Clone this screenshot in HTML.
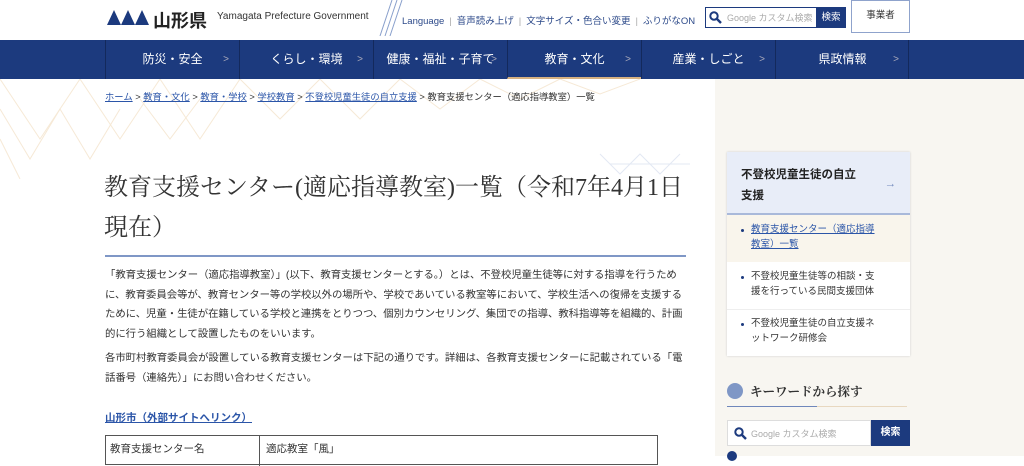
<!DOCTYPE html>
<html><head><meta charset="utf-8"><style>
*{margin:0;padding:0;box-sizing:border-box}
body{width:1024px;height:456px;overflow:hidden;background:#fff;font-family:"Liberation Sans","Noto Sans CJK JP",sans-serif;color:#333;position:relative}
.abs{position:absolute}
.hdr a{color:#2d4a8a;text-decoration:none}
.nav{top:40px;left:0;width:1024px;height:39px;background:#1c3a7e}
.nav div{position:absolute;top:0;height:39px;width:134px;border-left:1px solid #13295c;color:#fff;font-size:12px;line-height:39px;text-align:center}
.nav div span{position:absolute;right:10px;top:0;color:#aab;font-size:10px}
.side{left:715px;top:79px;width:309px;height:377px;background:#f8f6f1}
.bc{top:89px;left:105px;font-size:9.3px;color:#333;white-space:nowrap}
.bc a{color:#2b55a8;text-decoration:underline}
p.t{font-size:10.4px;line-height:19.5px;color:#333;letter-spacing:-0.05px}
.li{position:absolute;left:751px;font-size:9.5px;line-height:14.5px;color:#333}
.li:before{content:"";position:absolute;left:-10px;top:6px;width:3px;height:3px;border-radius:50%;background:#1c3a7e}
</style></head><body>
<div class="abs side"></div>
<svg class="abs" style="left:0;top:79px" width="715" height="100"><g stroke="#f6e9d6" stroke-width="1" fill="none">
<path d="M0 0 L40 60 L80 0 L120 60 L160 0 L200 60 L240 0 L280 40 L320 0 L360 40 L400 0 L440 30 L480 0 L520 20 L560 0 L600 15 L640 0"/>
<path d="M0 30 L30 80 L60 30 L90 80 L120 30 M0 60 L20 100 M140 20 L170 60 L200 20"/></g>
<g stroke="#e3e8f3" fill="none"><path d="M600 75 L620 95 L640 75 L660 95 L680 75 M610 85 L690 85"/></g></svg>
<div class="hdr">
<svg class="abs" style="left:107px;top:10px" width="42" height="15"><path d="M0 15L7 0L14 15ZM14 15L21 0L28 15ZM28 15L35 0L42 15Z" fill="#1c3a7e"/></svg>
<div class="abs" style="left:153px;top:7px;font-size:18px;font-weight:bold;color:#222">山形県</div>
<div class="abs" style="left:217px;top:11px;font-size:10px;color:#333">Yamagata Prefecture Government</div>
<svg class="abs" style="left:375px;top:0" width="30" height="36"><path d="M10 36L22 0M15 36L27 0M5 36L17 0" stroke="#8aa0cc" stroke-width="1"/></svg>
<div class="abs" style="left:402px;top:13px;font-size:9.5px;color:#2d4a8a;white-space:nowrap"><a>Language</a><span style="color:#aaa;margin:0 5px">|</span><a>音声読み上げ</a><span style="color:#aaa;margin:0 5px">|</span><a>文字サイズ・色合い変更</a><span style="color:#aaa;margin:0 5px">|</span><a>ふりがなON</a></div>
<div class="abs" style="left:705px;top:7px;width:141px;height:21px;border:1px solid #1c3a7e;background:#fff"></div>
<svg class="abs" style="left:709px;top:11px" width="13" height="13"><circle cx="5" cy="5" r="3.7" stroke="#1c3a7e" stroke-width="2" fill="none"/><path d="M8 8L12 12" stroke="#1c3a7e" stroke-width="2.4"/></svg>
<div class="abs" style="left:727px;top:11px;font-size:9px;color:#aaa;white-space:nowrap">Google カスタム検索</div>
<div class="abs" style="left:816px;top:7px;width:30px;height:21px;background:#1c3a7e;color:#fff;font-size:9.5px;line-height:21px;text-align:center">検索</div>
<div class="abs" style="left:851px;top:0;width:59px;height:33px;border:1px solid #8fa3cc;color:#333;font-size:9.5px;line-height:30px;text-align:center">事業者</div>
</div>
<div class="abs nav">
<div style="left:105px">防災・安全<span>&gt;</span></div>
<div style="left:239px">くらし・環境<span>&gt;</span></div>
<div style="left:373px">健康・福祉・子育て<span>&gt;</span></div>
<div style="left:507px;border-bottom:2px solid #d7b282">教育・文化<span>&gt;</span></div>
<div style="left:641px">産業・しごと<span>&gt;</span></div>
<div style="left:775px">県政情報<span>&gt;</span></div>
<div style="left:908px;width:116px"></div>
</div>
<div class="abs bc"><a>ホーム</a> &gt; <a>教育・文化</a> &gt; <a>教育・学校</a> &gt; <a>学校教育</a> &gt; <a>不登校児童生徒の自立支援</a> &gt; 教育支援センター（適応指導教室）一覧</div>
<div class="abs" style="left:104px;top:168px;width:600px;font-family:'Liberation Serif','Noto Serif CJK SC',serif;font-size:24px;line-height:40px;color:#333">教育支援センター(適応指導教室)一覧（令和7年4月1日現在）</div>
<div class="abs" style="left:105px;top:255px;width:581px;height:2px;background:#7f97c6"></div>
<div class="abs" style="left:105px;top:266px;width:583px">
<p class="t">「教育支援センター（適応指導教室）」(以下、教育支援センターとする。）とは、不登校児童生徒等に対する指導を行うために、教育委員会等が、教育センター等の学校以外の場所や、学校であいている教室等において、学校生活への復帰を支援するために、児童・生徒が在籍している学校と連携をとりつつ、個別カウンセリング、集団での指導、教科指導等を組織的、計画的に行う組織として設置したものをいいます。</p>
<p class="t" style="margin-top:5px">各市町村教育委員会が設置している教育支援センターは下記の通りです。詳細は、各教育支援センターに記載されている「電話番号（連絡先）」にお問い合わせください。</p>
</div>
<div class="abs" style="left:105px;top:410px;font-size:10.5px;font-weight:bold;color:#2b55a8;text-decoration:underline">山形市（外部サイトへリンク）</div>
<div class="abs" style="left:105px;top:435px;width:553px;height:30px;border:1px solid #555;font-size:10.5px">
<div class="abs" style="left:0;top:0;width:154px;height:30px;border-right:1px solid #555;padding:5px 4px">教育支援センター名</div>
<div class="abs" style="left:160px;top:5px">適応教室「風」</div></div>
<div class="abs" style="left:727px;top:152px;width:183px;height:204px;background:#fff;box-shadow:0 0 2px #ccc"></div>
<div class="abs" style="left:727px;top:152px;width:183px;height:63px;background:#e8edf8;border-bottom:2px solid #a9b9da;padding:13px 14px;font-size:11.5px;font-weight:bold;line-height:21px;color:#222">不登校児童生徒の自立<br>支援<span style="position:absolute;right:14px;top:22px;color:#6f87bb;font-weight:normal">→</span></div>
<div class="abs" style="left:727px;top:215px;width:183px;height:47px;background:#f9f5ec"></div>
<div class="li" style="top:223px;color:#2b55a8;text-decoration:underline">教育支援センター（適応指導<br>教室）一覧</div>
<div class="li" style="top:270px">不登校児童生徒等の相談・支<br>援を行っている民間支援団体</div>
<div class="abs" style="left:727px;top:309px;width:183px;height:1px;background:#eee"></div>
<div class="li" style="top:317px">不登校児童生徒の自立支援ネ<br>ットワーク研修会</div>
<div class="abs" style="left:727px;top:383px;width:16px;height:16px;border-radius:50%;background:#7f97c6"></div>
<div class="abs" style="left:750px;top:382px;font-size:12.5px;font-weight:bold;font-family:'Liberation Serif','Noto Serif CJK SC',serif;color:#333">キーワードから探す</div>
<div class="abs" style="left:727px;top:406px;width:90px;height:1px;background:#6f87bb"></div>
<div class="abs" style="left:817px;top:406px;width:90px;height:1px;background:#e8d8c0"></div>
<div class="abs" style="left:727px;top:420px;width:144px;height:26px;background:#fff;border:1px solid #ddd"></div>
<svg class="abs" style="left:734px;top:427px" width="13" height="13"><circle cx="5" cy="5" r="3.7" stroke="#1c3a7e" stroke-width="2" fill="none"/><path d="M8 8L12 12" stroke="#1c3a7e" stroke-width="2.4"/></svg>
<div class="abs" style="left:751px;top:427px;font-size:9px;color:#aaa">Google カスタム検索</div>
<div class="abs" style="left:871px;top:420px;width:39px;height:26px;background:#1c3a7e;color:#fff;font-size:10px;font-weight:bold;line-height:26px;text-align:center">検索</div>
<div class="abs" style="left:727px;top:451px;width:10px;height:10px;border-radius:50%;background:#1c3a7e"></div>
</body></html>
